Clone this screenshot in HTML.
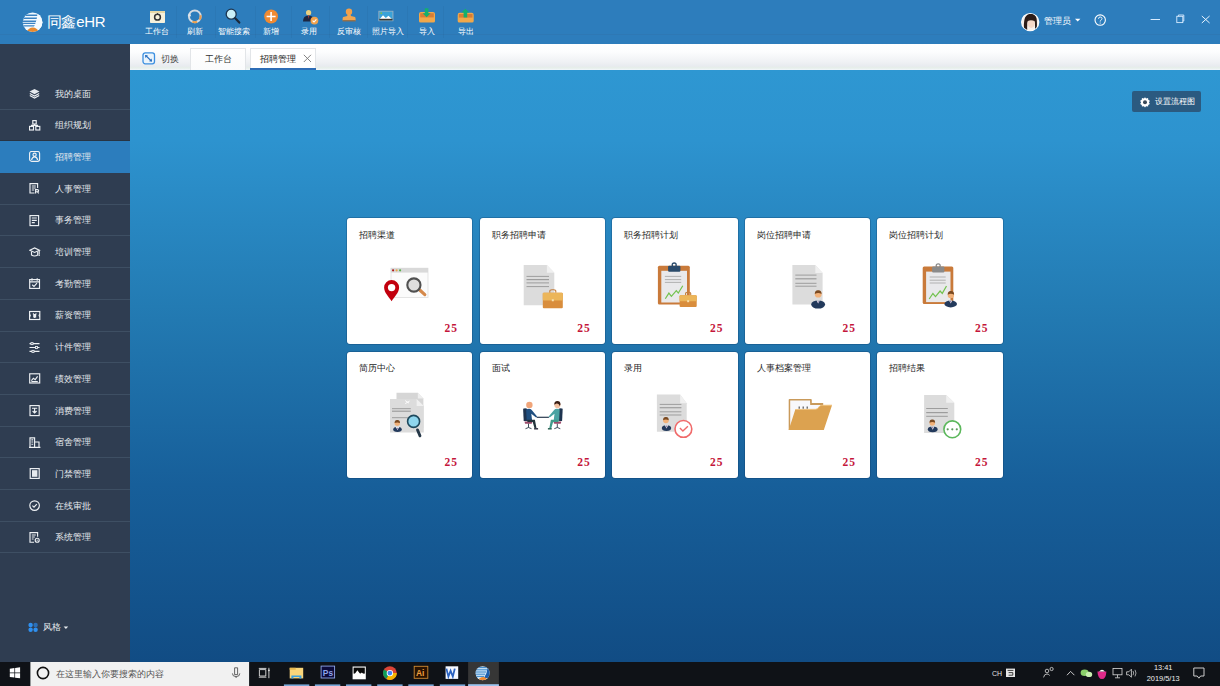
<!DOCTYPE html>
<html><head><meta charset="utf-8">
<style>
*{box-sizing:border-box;margin:0;padding:0}
html,body{width:1220px;height:686px;overflow:hidden}
body{position:relative;font-family:"Liberation Sans",sans-serif;background:#2d7dbc}
.abs{position:absolute}
#hdr{left:0;top:0;width:1220px;height:44px;background:#2d7dbc}
#side{left:0;top:44px;width:130px;height:618px;background:#2f3d51}
#tabs{left:130px;top:44px;width:1090px;height:26px;background:linear-gradient(#ffffff 0%,#fcfdfe 30%,#eff1f4 70%,#e8ebef 85%,#e6efe9 92%,#f2f6fc 100%)}
#main{left:130px;top:70px;width:1090px;height:592px;background:linear-gradient(#2e97d2 0%,#2d93cf 12%,#237bb3 40%,#175f9a 70%,#114c84 100%)}
#task{left:0;top:662px;width:1220px;height:24px;background:#0f1217}
.item{position:absolute;left:0;width:130px;height:31.7px;border-bottom:1px solid #3e4f63}
.item .t{position:absolute;left:55px;top:10.5px;font-size:9px;line-height:10px;color:#e6eaee;white-space:nowrap}
.item svg{position:absolute;left:29px;top:10px}
.card{position:absolute;width:125.5px;height:125.9px;background:#fff;border-radius:3px;box-shadow:0 0 0 0.7px rgba(10,50,90,0.35)}
.card .t{position:absolute;left:12px;top:11.6px;font-size:9px;line-height:10px;color:#1e1e1e;white-space:nowrap}
.card .n{position:absolute;right:14.2px;bottom:12px;font-family:"Liberation Serif",serif;font-weight:bold;font-size:11.5px;line-height:8px;color:#c4163a;letter-spacing:1px}
.card svg{position:absolute;left:0;top:0}
.tb{position:absolute;top:27px;font-size:7.5px;line-height:9px;color:#fff;white-space:nowrap;transform:translateX(-50%)}
.sep{position:absolute;top:6px;width:1px;height:32px;background:rgba(0,0,0,0.035)}
</style></head><body>

<div id="hdr" class="abs">
<div class="abs" style="left:0;top:33.6px;width:1220px;height:1.2px;background:rgba(60,90,120,0.12)"></div>
<svg class="abs" style="left:22px;top:12px" width="22" height="21" viewBox="0 0 22 21">
<defs><clipPath id="lc"><circle cx="10.6" cy="10.2" r="9.8"/></clipPath></defs>
<circle cx="10.6" cy="10.2" r="9.8" fill="#f2faff"/>
<g clip-path="url(#lc)">
<path d="M0 3.2h16M0 6.2h16M0 9.2h15M0 11.4h14M0 13.9h13" stroke="#3a82c2" stroke-width="1.35"/>
<path d="M15.2 0 Q16 6 11.6 15.8 L22 16 L22 0Z" fill="#f4fbff"/>
<path d="M3.6 21 Q6.4 15.8 10.8 15.6 Q15.2 15.8 17.8 21Z" fill="#e98a2c"/>
</g></svg>
<div class="abs" style="left:46.8px;top:14px;font-size:14.5px;line-height:16px;color:#fff;white-space:nowrap;letter-spacing:-0.3px">同鑫<span style="font-size:15px">eHR</span></div>

<svg class="abs" style="left:140px;top:5px" width="345" height="22" viewBox="140 5 345 22">
<!-- 工作台 -->
<rect x="150" y="11" width="15" height="12" rx="0.8" fill="#f6f1dc"/>
<rect x="150" y="11" width="15" height="2" fill="#e7d9a8"/>
<circle cx="157.5" cy="17.2" r="2.9" fill="none" stroke="#333" stroke-width="1.5"/>
<rect x="157" y="13.2" width="1" height="1.5" fill="#333"/>
<!-- refresh -->
<circle cx="194.8" cy="16.3" r="5.9" fill="none" stroke="#d3dbe3" stroke-width="2"/>
<path d="M200.5 15.2 A5.9 5.9 0 0 1 199.6 19.8" fill="none" stroke="#e89a50" stroke-width="2"/>
<path d="M192.4 21.7 A5.9 5.9 0 0 0 197 21.8" fill="none" stroke="#e8a050" stroke-width="2"/>
<path d="M187.6 15.6 L190 12.8 L191.2 16.4Z" fill="#dfe6ec"/>
<!-- search -->
<circle cx="231.2" cy="14.2" r="5" fill="#c9eff7" stroke="#1c3550" stroke-width="1.3"/>
<path d="M235.2 18.3 L239.3 22.6" stroke="#1c2a3a" stroke-width="2.2" stroke-linecap="round"/>
<!-- add -->
<circle cx="271.1" cy="16.5" r="6.9" fill="#ef8a32"/>
<path d="M266.6 16.5h9M271.1 12v9" stroke="#fff" stroke-width="1.6"/>
<!-- luyong -->
<circle cx="308.6" cy="12.7" r="2.6" fill="#e9cf80"/>
<path d="M303 21.5 Q303 15.4 308.6 15.4 Q314 15.4 314 21.5Z" fill="#1c2640"/>
<path d="M308 15.6 L309.2 15.6 L308.9 19 Z" fill="#c9403a"/>
<circle cx="314.4" cy="20.6" r="3.9" fill="#f0a24e"/>
<path d="M312.6 20.6 L314 22 L316.4 19.3" stroke="#fff" stroke-width="1.1" fill="none"/>
<!-- stamp -->
<circle cx="349" cy="11.8" r="3.2" fill="#f2a04a"/>
<path d="M347.6 14 L350.4 14 L351 16 L355 17 Q355.6 17.5 355.6 19 L355.6 20.4 L342.6 20.4 L342.6 19 Q342.6 17.5 343.2 17 L347.2 16Z" fill="#f0a652"/>
<rect x="342.6" y="20.2" width="13" height="1.2" fill="#9b6a3a"/>
<!-- photo -->
<rect x="378.4" y="10.8" width="15" height="10.4" fill="#9ab0c0"/>
<rect x="379.3" y="11.6" width="13.2" height="8.8" fill="#3aa2d8"/>
<path d="M379.3 19.6 L383 15.3 L385.8 18 L388.4 15.8 L392.5 19.6Z" fill="#fff"/>
<rect x="379.3" y="18.8" width="13.2" height="1.6" fill="#3a3530"/>
<circle cx="381.2" cy="13.2" r="0.9" fill="#7ac050"/>
<!-- import -->
<path d="M419 14 Q419 12 421 12 L433 12 Q435 12 435 14 L435 21 Q435 22.6 433.4 22.6 L420.6 22.6 Q419 22.6 419 21Z" fill="#f1a84a"/>
<path d="M420.2 13.2 L433.8 13.2 L433.8 17.4 L420.2 17.4Z" fill="#d77d35"/>
<path d="M424.8 8.3h3.6v5h2.2l-4 3.9-4-3.9h2.2Z" fill="#12b06e"/>
<!-- export -->
<path d="M457.7 15 Q457.7 12.8 459.7 12.8 L471.7 12.8 Q473.7 12.8 473.7 15 L473.7 21 Q473.7 22.6 472.1 22.6 L459.3 22.6 Q457.7 22.6 457.7 21Z" fill="#f1a84a"/>
<path d="M458.9 14 L472.5 14 L472.5 17.6 L458.9 17.6Z" fill="#d77d35"/>
<path d="M463.6 17.6h3.6v-5h2.2l-4-3.9-4 3.9h2.2Z" fill="#12b06e"/>
</svg>
<div class="sep" style="left:175.5px"></div><div class="sep" style="left:215px"></div><div class="sep" style="left:255px"></div><div class="sep" style="left:290.5px"></div><div class="sep" style="left:328.5px"></div><div class="sep" style="left:367px"></div><div class="sep" style="left:406.5px"></div><div class="sep" style="left:443px"></div>
<div class="tb" style="left:157px">工作台</div>
<div class="tb" style="left:194.5px">刷新</div>
<div class="tb" style="left:233.8px">智能搜索</div>
<div class="tb" style="left:271px">新增</div>
<div class="tb" style="left:309.2px">录用</div>
<div class="tb" style="left:349.3px">反审核</div>
<div class="tb" style="left:387.5px">照片导入</div>
<div class="tb" style="left:427.2px">导入</div>
<div class="tb" style="left:466.2px">导出</div>

<svg class="abs" style="left:1020px;top:12px" width="21" height="20" viewBox="1020 12 21 20">
<defs><clipPath id="av"><circle cx="1030.2" cy="22.1" r="8.3"/></clipPath></defs>
<circle cx="1030.2" cy="22.1" r="9.2" fill="#fff"/>
<g clip-path="url(#av)">
<rect x="1020" y="12" width="21" height="20" fill="#f6f0ec"/>
<path d="M1024 32 Q1023.4 21 1025.2 17.2 Q1027.6 13.6 1031.6 13.8 Q1035.8 14.4 1036.6 18.6 Q1037.4 24 1036.4 32 L1034.8 32 Q1035.4 25 1034.6 21 Q1031 19.6 1027.6 21.6 Q1026.8 26 1027.4 32Z" fill="#2c1c18"/>
<ellipse cx="1031.2" cy="23.2" rx="3.6" ry="4.8" fill="#f4d8c8"/>
<path d="M1027.4 21 Q1029 17.4 1032.4 17.6 Q1034.8 18.4 1035 21.6 Q1032 19.4 1027.4 21Z" fill="#2c1c18"/>
</g></svg>
<div class="abs" style="left:1044px;top:15.5px;font-size:9px;line-height:10px;color:#fff;white-space:nowrap">管理员</div>
<svg class="abs" style="left:1074px;top:18px" width="8" height="5"><path d="M1 0.8 L6.4 0.8 L3.7 3.6Z" fill="#fff"/></svg>
<svg class="abs" style="left:1093px;top:13px" width="15" height="15" viewBox="0 0 15 15">
<circle cx="7.2" cy="7.1" r="5.2" fill="none" stroke="#fff" stroke-width="1.1"/>
<path d="M5.5 5.8 Q5.5 4 7.2 4 Q9 4 9 5.6 Q9 6.6 7.8 7.2 Q7.2 7.6 7.2 8.6" fill="none" stroke="#fff" stroke-width="0.9"/>
<circle cx="7.2" cy="10" r="0.6" fill="#fff"/>
</svg>
<svg class="abs" style="left:1140px;top:8px" width="80" height="28" viewBox="1140 8 80 28">
<path d="M1150.6 19.5h9.4" stroke="#d8ecff" stroke-width="1"/>
<rect x="1176.8" y="16.3" width="6" height="6.3" fill="none" stroke="#d8ecff" stroke-width="0.9"/>
<path d="M1178.4 16.3 L1178.4 15 L1183.8 15 L1183.8 21 L1182.8 21" fill="none" stroke="#d8ecff" stroke-width="0.9"/>
<path d="M1201.8 16 L1209.6 23 M1209.6 16 L1201.8 23" stroke="#e8f4ff" stroke-width="1"/>
</svg>
</div>
<div id="side" class="abs"><div class="item" style="top:34.00px;"><svg width="12" height="12" viewBox="0 0 12 12"><path d="M5.5 1 L10.5 3.6 L5.5 6.2 L0.5 3.6Z" fill="#e6eaee"/><path d="M0.8 5.6 L5.5 8 L10.2 5.6 M0.8 7.6 L5.5 10 L10.2 7.6" fill="none" stroke="#eef1f4" stroke-width="1.15"/></svg><div class="t">我的桌面</div></div>
<div class="item" style="top:65.70px;border-bottom-color:#283444;"><svg width="12" height="12" viewBox="0 0 12 12"><rect x="3.8" y="0.6" width="3.4" height="3.4" fill="none" stroke="#eef1f4" stroke-width="1.15"/><rect x="0.5" y="6.4" width="4" height="3.6" fill="none" stroke="#eef1f4" stroke-width="1.15"/><rect x="6.8" y="6.4" width="4" height="3.6" fill="none" stroke="#eef1f4" stroke-width="1.15"/><path d="M5.5 4v1.4M2.5 6.4V5.4h6v1" fill="none" stroke="#eef1f4" stroke-width="1.15"/></svg><div class="t">组织规划</div></div>
<div class="item" style="top:97.40px;background:#2c7dbd;border-bottom-color:#2c7dbd;"><svg width="12" height="12" viewBox="0 0 12 12"><rect x="0.6" y="0.5" width="10" height="9.8" rx="2" fill="none" stroke="#eef1f4" stroke-width="1.15"/><circle cx="5.6" cy="3.7" r="1.6" fill="none" stroke="#eef1f4" stroke-width="1.15"/><path d="M2.6 9 Q3.2 5.8 5.6 5.8 Q8 5.8 8.6 9" fill="none" stroke="#eef1f4" stroke-width="1.15"/></svg><div class="t">招聘管理</div></div>
<div class="item" style="top:129.10px;"><svg width="12" height="12" viewBox="0 0 12 12"><path d="M8.6 5 V0.6 H1 V10 H5.5" fill="none" stroke="#eef1f4" stroke-width="1.15"/><path d="M2.8 3h4M2.8 5h4M2.8 7h2.4" fill="none" stroke="#eef1f4" stroke-width="1.15"/><path d="M6.6 10.4 V6.6 H8.4 Q9.6 6.6 9.6 7.7 Q9.6 8.7 8.4 8.7 H6.6 M8.2 8.7 L9.8 10.4" fill="none" stroke="#eef1f4" stroke-width="1.15" stroke-width="0.9"/></svg><div class="t">人事管理</div></div>
<div class="item" style="top:160.80px;"><svg width="12" height="12" viewBox="0 0 12 12"><rect x="1" y="0.6" width="8.6" height="10" fill="none" stroke="#eef1f4" stroke-width="1.15"/><path d="M2.8 3h5M2.8 5.3h5M2.8 7.6h3" fill="none" stroke="#eef1f4" stroke-width="1.15"/></svg><div class="t">事务管理</div></div>
<div class="item" style="top:192.50px;"><svg width="12" height="12" viewBox="0 0 12 12"><path d="M0.8 3.2 L5.6 1 L10.4 3.2 L5.6 5.4Z" fill="none" stroke="#eef1f4" stroke-width="1.15"/><path d="M2.5 4.4 V8 Q5.6 10 8.7 8 V4.4" fill="none" stroke="#eef1f4" stroke-width="1.15"/><path d="M10.2 3.4 V7.4" fill="none" stroke="#eef1f4" stroke-width="1.15"/><circle cx="10.2" cy="8.2" r="0.8" fill="#e6eaee"/></svg><div class="t">培训管理</div></div>
<div class="item" style="top:224.20px;"><svg width="12" height="12" viewBox="0 0 12 12"><rect x="0.7" y="1.6" width="9.8" height="8.8" fill="none" stroke="#eef1f4" stroke-width="1.15"/><path d="M0.7 3.8h9.8M3 0.3v2.4M8.2 0.3v2.4" fill="none" stroke="#eef1f4" stroke-width="1.15"/><path d="M3.2 6.8 L5 8.4 L8 5.2" fill="none" stroke="#eef1f4" stroke-width="1.15"/></svg><div class="t">考勤管理</div></div>
<div class="item" style="top:255.90px;"><svg width="12" height="12" viewBox="0 0 12 12"><rect x="0.6" y="1.5" width="10.2" height="8" fill="none" stroke="#eef1f4" stroke-width="1.15"/><path d="M4 3.5 L5.7 5.3 L7.4 3.5M5.7 5.3v2.6M4.2 5.6h3M4.2 6.8h3" fill="none" stroke="#eef1f4" stroke-width="1.15" stroke-width="0.8"/><path d="M0.6 4.4 Q2 5.5 0.6 6.6 M10.8 4.4 Q9.4 5.5 10.8 6.6" fill="none" stroke="#eef1f4" stroke-width="1.15"/></svg><div class="t">薪资管理</div></div>
<div class="item" style="top:287.60px;"><svg width="12" height="12" viewBox="0 0 12 12"><path d="M0.5 1.6h10M0.5 5.5h10M0.5 9.4h10" fill="none" stroke="#eef1f4" stroke-width="1.15"/><rect x="2" y="0.6" width="2" height="2" fill="#2f3d51" stroke="#e6eaee" stroke-width="0.9"/><rect x="6.5" y="4.5" width="2" height="2" fill="#2f3d51" stroke="#e6eaee" stroke-width="0.9"/><rect x="3" y="8.4" width="2" height="2" fill="#2f3d51" stroke="#e6eaee" stroke-width="0.9"/></svg><div class="t">计件管理</div></div>
<div class="item" style="top:319.30px;"><svg width="12" height="12" viewBox="0 0 12 12"><rect x="0.7" y="0.8" width="10" height="9.2" fill="none" stroke="#eef1f4" stroke-width="1.15"/><path d="M2.4 7.6 L4.4 5.2 L6.2 6.6 L8.6 3.4" fill="none" stroke="#eef1f4" stroke-width="1.15"/><path d="M2.4 8.6h6.4" fill="none" stroke="#eef1f4" stroke-width="1.15"/></svg><div class="t">绩效管理</div></div>
<div class="item" style="top:351.00px;"><svg width="12" height="12" viewBox="0 0 12 12"><rect x="1" y="0.6" width="9.2" height="10" fill="none" stroke="#eef1f4" stroke-width="1.15"/><path d="M3 3.2h5.2M5.6 3.2v4.6M3.6 6 L5.6 8 L7.6 6" fill="none" stroke="#eef1f4" stroke-width="1.15"/></svg><div class="t">消费管理</div></div>
<div class="item" style="top:382.70px;"><svg width="12" height="12" viewBox="0 0 12 12"><path d="M1 10.4 V0.8 H5.6 V10.4 M0 10.4h11.4 M5.6 5h4.4v5.4" fill="none" stroke="#eef1f4" stroke-width="1.15"/><path d="M2.4 2.8h1.8M2.4 5h1.8M2.4 7.2h1.8" fill="none" stroke="#eef1f4" stroke-width="1.15"/></svg><div class="t">宿舍管理</div></div>
<div class="item" style="top:414.40px;"><svg width="12" height="12" viewBox="0 0 12 12"><rect x="1.2" y="0.6" width="9" height="9.8" fill="none" stroke="#eef1f4" stroke-width="1.15"/><rect x="3" y="2.2" width="5.4" height="6.6" fill="#e6eaee"/></svg><div class="t">门禁管理</div></div>
<div class="item" style="top:446.10px;"><svg width="12" height="12" viewBox="0 0 12 12"><circle cx="5.6" cy="5.6" r="4.8" fill="none" stroke="#eef1f4" stroke-width="1.15"/><path d="M3.4 5.6 L5 7.2 L7.8 4.2" fill="none" stroke="#eef1f4" stroke-width="1.15"/></svg><div class="t">在线审批</div></div>
<div class="item" style="top:477.80px;"><svg width="12" height="12" viewBox="0 0 12 12"><path d="M8.6 4.8 V0.6 H1 V10.2 H5" fill="none" stroke="#eef1f4" stroke-width="1.15"/><path d="M2.8 3h4M2.8 5h3M2.8 7h1.8" fill="none" stroke="#eef1f4" stroke-width="1.15"/><circle cx="8.2" cy="8.2" r="2" fill="none" stroke="#eef1f4" stroke-width="1.15"/><circle cx="8.2" cy="8.2" r="0.6" fill="#e6eaee"/></svg><div class="t">系统管理</div></div>
<svg class="abs" style="left:27px;top:577px" width="12" height="12" viewBox="0 0 12 12">
<circle cx="3.6" cy="4" r="2.2" fill="#2f90f0"/><circle cx="8.6" cy="4" r="2.2" fill="#2a6fb8"/><circle cx="3.6" cy="8.8" r="2.2" fill="#2f90f0"/><circle cx="8.6" cy="8.8" r="2.2" fill="#2f90f0"/>
</svg>
<div class="abs" style="left:42.5px;top:578px;font-size:9px;line-height:10px;color:#e6eaee;white-space:nowrap">风格</div>
<svg class="abs" style="left:63px;top:582px" width="6" height="4"><path d="M0.6 0.6 L5.2 0.6 L2.9 3Z" fill="#e6eaee"/></svg>
</div>
<div id="tabs" class="abs">
<svg class="abs" style="left:11.5px;top:7.5px" width="14" height="13" viewBox="0 0 14 13">
<rect x="1" y="0.8" width="11.5" height="11" rx="2.2" fill="#eaf4fc" stroke="#3b8fe0" stroke-width="1.3"/>
<path d="M3.6 3.4 L9.6 9.2" stroke="#2a6fc0" stroke-width="1.2"/>
<path d="M3 3 L6 3.4 L3.4 6Z" fill="#2a6fc0"/><path d="M10 9.6 L7 9.2 L9.6 6.6Z" fill="#2a6fc0"/>
</svg>
<div class="abs" style="left:31px;top:9.5px;font-size:9px;line-height:10px;color:#444;white-space:nowrap">切换</div>
<div class="abs" style="left:59.8px;top:3.6px;width:56px;height:22.4px;background:linear-gradient(#fff,#fafbfc);border:1px solid #e2e5e8;border-bottom:none"></div>
<div class="abs" style="left:74.6px;top:9.5px;font-size:9px;line-height:10px;color:#333;white-space:nowrap">工作台</div>
<div class="abs" style="left:119.7px;top:3.6px;width:66.3px;height:22.4px;background:#fff;border:1px solid #e2e5e8;border-bottom:none"></div>
<div class="abs" style="left:119.7px;top:23.6px;width:66.3px;height:2.4px;background:#2d6db6"></div>
<div class="abs" style="left:130.3px;top:9.5px;font-size:9px;line-height:10px;color:#222;white-space:nowrap">招聘管理</div>
<svg class="abs" style="left:172.5px;top:10px" width="9" height="9" viewBox="0 0 9 9"><path d="M0.8 0.8 L8 8 M8 0.8 L0.8 8" stroke="#777" stroke-width="0.9"/></svg>
</div>
<div id="main" class="abs"><div class="card" style="left:216.80px;top:148.00px"><svg width="126" height="126" viewBox="346.8 218 126 126"><rect x="390.8" y="268.2" width="37" height="29.4" fill="#fbfbfb" stroke="#dedede" stroke-width="0.8"/>
<rect x="390.6" y="268" width="37.2" height="4.6" fill="#d9d9d9"/>
<circle cx="392.9" cy="270.3" r="1.1" fill="#b01818"/><circle cx="396.4" cy="270.3" r="1.1" fill="#e8a850"/><circle cx="399.9" cy="270.3" r="1.1" fill="#5ab04a"/>
<path d="M419.8 290.3 L424.6 294.6" stroke="#d5894a" stroke-width="3.2" stroke-linecap="round"/>
<circle cx="413.7" cy="285" r="6.6" fill="#dedede" stroke="#505050" stroke-width="2.1"/>
<path d="M391.4 301.2 C388.6 297 383.9 292.6 383.9 287.6 A7.5 7.5 0 0 1 398.9 287.6 C398.9 292.6 394.2 297 391.4 301.2Z" fill="#c2000e"/>
<circle cx="391.4" cy="287.6" r="3.7" fill="#fff"/></svg><div class="t">招聘渠道</div><div class="n">25</div></div>
<div class="card" style="left:349.50px;top:148.00px"><svg width="126" height="126" viewBox="479.5 218 126 126"><path d="M523.2 264.9 L546.4 264.9 L553.8 272.7 L553.8 305.3 L523.2 305.3Z" fill="#dcdcdc"/><path d="M546.4 264.9 L553.8 272.7 L546.4 272.7Z" fill="#f0f0f0"/><path d="M526 276.4H548.5" stroke="#9d9d9d" stroke-width="1"/><path d="M526 279.6H548.5" stroke="#9d9d9d" stroke-width="1.2"/><path d="M526 282.9H548.5" stroke="#9d9d9d" stroke-width="1"/><path d="M526 286.6H548.5" stroke="#9d9d9d" stroke-width="1"/><path d="M549.30 292.80 V290.80 Q549.30 289.80 551.30 289.80 H553.30 Q555.30 289.80 555.30 290.80 V292.80" fill="none" stroke="#c27d3c" stroke-width="1.1"/><rect x="542.30" y="292.80" width="20.00" height="15.40" rx="1" fill="#d98d3c"/><rect x="542.30" y="292.80" width="20.00" height="7.70" rx="1" fill="#ecb65a"/><rect x="551.30" y="299.27" width="2" height="2" fill="#f6e0b0"/></svg><div class="t">职务招聘申请</div><div class="n">25</div></div>
<div class="card" style="left:482.10px;top:148.00px"><svg width="126" height="126" viewBox="612.1 218 126 126"><rect x="658" y="265.8" width="31.90" height="38.70" rx="1.5" fill="#c97a3a"/><rect x="661.40" y="270.80" width="25.70" height="31.70" fill="#e9e9eb"/><rect x="668.20" y="265.80" width="12.3" height="6" rx="1" fill="#2b4b6b"/><circle cx="674.30" cy="265.00" r="2" fill="none" stroke="#2b4b6b" stroke-width="1.3"/><path d="M665 276.4H681.3M665 279.6H681.3M665 282.4H681.3" stroke="#aaa" stroke-width="0.9"/><path d="M665.4 298.8 L669 293.1 L671.5 296.4 L676.4 290.7 L678.4 293.1 L682.9 285.8" fill="none" stroke="#72c24e" stroke-width="1.2"/><path d="M685.69 295.30 V293.30 Q685.69 292.30 687.39 292.30 H689.11 Q690.81 292.30 690.81 293.30 V295.30" fill="none" stroke="#c27d3c" stroke-width="1.1"/><rect x="679.70" y="295.30" width="17.10" height="11.70" rx="1" fill="#d98d3c"/><rect x="679.70" y="295.30" width="17.10" height="5.85" rx="1" fill="#ecb65a"/><rect x="687.25" y="300.21" width="2" height="2" fill="#f6e0b0"/></svg><div class="t">职务招聘计划</div><div class="n">25</div></div>
<div class="card" style="left:614.80px;top:148.00px"><svg width="126" height="126" viewBox="744.8 218 126 126"><path d="M792.2 264.9 L815.1 264.9 L822.4 273.1 L822.4 304.5 L792.2 304.5Z" fill="#dcdcdc"/><path d="M815.1 264.9 L822.4 273.1 L815.1 273.1Z" fill="#f0f0f0"/><path d="M795.1 275.1H816.3" stroke="#9d9d9d" stroke-width="1"/><path d="M795.1 278.8H816.3" stroke="#9d9d9d" stroke-width="1.2"/><path d="M795.1 283.3H816.3" stroke="#9d9d9d" stroke-width="1"/><path d="M795.1 286.2H816.3" stroke="#9d9d9d" stroke-width="1"/><ellipse cx="817.95" cy="304.50" rx="6.95" ry="4.10" fill="#233a5c"/><path d="M816.35 300.40 L817.95 303.60 L819.55 300.40Z" fill="#fff"/><path d="M817.45 301.00 L818.45 301.00 L817.95 303.20Z" fill="#6a4a8a"/><circle cx="818" cy="294.2" r="3.4" fill="#f2b27a"/><path d="M814.60 294.00 Q814.60 290.00 818.00 290.20 Q821.40 290.00 821.40 294.00 Q818.00 292.00 814.60 294.00Z" fill="#7a4a22"/></svg><div class="t">岗位招聘申请</div><div class="n">25</div></div>
<div class="card" style="left:747.30px;top:148.00px"><svg width="126" height="126" viewBox="877.3 218 126 126"><rect x="923" y="266.6" width="30.60" height="37.50" rx="1.5" fill="#c97a3a"/><rect x="926.40" y="271.60" width="24.40" height="30.50" fill="#e9e9eb"/><rect x="932.40" y="266.60" width="12.3" height="6" rx="1" fill="#8a8a8a"/><circle cx="938.50" cy="265.80" r="2" fill="none" stroke="#8a8a8a" stroke-width="1.3"/><path d="M930 277H946M930 280.2H946M930 283H946" stroke="#aaa" stroke-width="0.9"/><path d="M929.5 299 L933.2 293.5 L935.8 296.6 L940.4 291 L942.6 293.4 L946.8 286" fill="none" stroke="#72c24e" stroke-width="1.2"/><ellipse cx="951.00" cy="303.90" rx="6.30" ry="3.50" fill="#233a5c"/><path d="M949.40 300.40 L951.00 303.60 L952.60 300.40Z" fill="#fff"/><path d="M950.50 301.00 L951.50 301.00 L951.00 303.20Z" fill="#6a4a8a"/><circle cx="951.2" cy="294.9" r="3.2" fill="#f2b27a"/><path d="M948.00 294.70 Q948.00 290.90 951.20 291.10 Q954.40 290.90 954.40 294.70 Q951.20 292.90 948.00 294.70Z" fill="#7a4a22"/></svg><div class="t">岗位招聘计划</div><div class="n">25</div></div>
<div class="card" style="left:216.80px;top:281.90px"><svg width="126" height="126" viewBox="346.8 351.9 126 126"><path d="M396.3 392.7 L417.6 392.7 L423.2 398.4 L423.2 428 L396.3 428Z" fill="#d6d6d6"/><path d="M417.6 392.7 L423.2 398.4 L417.6 398.4Z" fill="#eee"/><path d="M389.8 398.8 L416.4 398.8 L423.6 405.8 L423.6 432.3 L389.8 432.3Z" fill="#dcdcdc"/><path d="M416.4 398.8 L423.6 405.8 L416.4 405.8Z" fill="#f0f0f0"/><path d="M391.8 408.6H410.6" stroke="#9d9d9d" stroke-width="1"/><path d="M391.8 411.1H410.6" stroke="#9d9d9d" stroke-width="1.2"/><path d="M391.8 417.6H410.6" stroke="#9d9d9d" stroke-width="1"/><path d="M405 400.5 L408.8 403 M405 403.5 L409.4 401" stroke="#fff" stroke-width="0.9"/><ellipse cx="397.30" cy="429.45" rx="4.30" ry="2.45" fill="#233a5c"/><path d="M395.70 427.00 L397.30 430.20 L398.90 427.00Z" fill="#fff"/><path d="M396.80 427.60 L397.80 427.60 L397.30 429.80Z" fill="#6a4a8a"/><circle cx="397.1" cy="423.2" r="2.7" fill="#f2b27a"/><path d="M394.40 423.00 Q394.40 419.70 397.10 419.90 Q399.80 419.70 399.80 423.00 Q397.10 421.70 394.40 423.00Z" fill="#7a4a22"/><path d="M417.3 429.8 L419.8 435.8" stroke="#263848" stroke-width="2.8" stroke-linecap="round"/><circle cx="413.4" cy="421.3" r="6" fill="#8fd6ee" stroke="#1f4a5e" stroke-width="1.6"/></svg><div class="t">简历中心</div><div class="n">25</div></div>
<div class="card" style="left:349.50px;top:281.90px"><svg width="126" height="126" viewBox="479.5 351.9 126 126"><path d="M536.2 417.2 H548.4" stroke="#2a3a50" stroke-width="1.2"/>
<path d="M522.6 408.6 Q524.6 407.6 526.6 408.6 L526.6 420.8 L523.2 420.8Z" fill="#1e3450"/>
<path d="M524 421.4 H531.6 Q532 423 531 423.6 H524.6Z" fill="#9a4a6a"/>
<path d="M528 423.6 V427.4 M525 428.6 L528 427.4 L531 428.6" stroke="#2a3a48" stroke-width="0.9" fill="none"/>
<path d="M525.6 409.4 Q529 407.6 531 409.6 L536.6 416.4 L535.6 417.4 L530.8 413.6 L531.6 420.4 L526.2 420.6Z" fill="#1f4f80"/>
<path d="M526.4 419.6 H534.4 L536 428.2 H534 L532.2 421.8 H527Z" fill="#24343c"/>
<path d="M533.6 428 H537.6 V429.4 H533.6Z" fill="#2a2a3a"/>
<circle cx="528.9" cy="404.8" r="3.2" fill="#f0a57a"/>
<path d="M562.2 408.6 Q560.2 407.6 558.2 408.6 L558.2 420.8 L561.6 420.8Z" fill="#1e3450"/>
<path d="M560.8 421.4 H553.2 Q552.8 423 553.8 423.6 H560.2Z" fill="#9a4a6a"/>
<path d="M556.8 423.6 V427.4 M559.8 428.6 L556.8 427.4 L553.8 428.6" stroke="#2a3a48" stroke-width="0.9" fill="none"/>
<path d="M559.2 409.4 Q555.8 407.6 553.8 409.6 L548.2 416.4 L549.2 417.4 L554 413.6 L553.2 420.4 L558.6 420.6Z" fill="#4aa3a3"/>
<path d="M558.4 419.6 H550.4 L548.8 428.2 H550.8 L552.6 421.8 H557.8Z" fill="#3f9a8a"/>
<path d="M547.4 428 H551.2 V429.4 H547.4Z" fill="#1f5a4a"/>
<circle cx="556.9" cy="405" r="3.1" fill="#f2c0a0"/>
<path d="M553.8 404.6 Q553.6 401 556.9 401 Q560 401 560 404.4 L559.2 406 Q558.6 403 556 403.4Z" fill="#3a1e14"/></svg><div class="t">面试</div><div class="n">25</div></div>
<div class="card" style="left:482.10px;top:281.90px"><svg width="126" height="126" viewBox="612.1 351.9 126 126"><path d="M657 394.5 L680.2 394.5 L686.8 403.1 L686.8 431.7 L657 431.7Z" fill="#dcdcdc"/><path d="M680.2 394.5 L686.8 403.1 L680.2 403.1Z" fill="#f0f0f0"/><path d="M659.8 404.3H681.5" stroke="#9d9d9d" stroke-width="1"/><path d="M659.8 407.6H681.5" stroke="#9d9d9d" stroke-width="1.2"/><path d="M659.8 411.7H681.5" stroke="#9d9d9d" stroke-width="1"/><path d="M659.8 414.9H681.5" stroke="#9d9d9d" stroke-width="1"/><ellipse cx="666.60" cy="428.00" rx="4.70" ry="2.90" fill="#233a5c"/><path d="M665.00 425.10 L666.60 428.30 L668.20 425.10Z" fill="#fff"/><path d="M666.10 425.70 L667.10 425.70 L666.60 427.90Z" fill="#6a4a8a"/><circle cx="666" cy="420.4" r="2.8" fill="#f2b27a"/><path d="M663.20 420.20 Q663.20 416.80 666.00 417.00 Q668.80 416.80 668.80 420.20 Q666.00 418.80 663.20 420.20Z" fill="#7a4a22"/><circle cx="683.5" cy="428.8" r="8.4" fill="#fff" stroke="#f06a6a" stroke-width="1.6"/><path d="M680 428 L683 430.9 L688 426.2" fill="none" stroke="#f06a6a" stroke-width="1.4"/></svg><div class="t">录用</div><div class="n">25</div></div>
<div class="card" style="left:614.80px;top:281.90px"><svg width="126" height="126" viewBox="744.8 351.9 126 126"><path d="M788.5 399.6 Q788.5 398.8 789.4 398.8 L810.6 398.8 Q811.6 398.8 811.6 399.8 L811.6 403 L823 403 L823 430 L788.5 430Z" fill="#c99a5a"/>
<path d="M790 400.5 L809.8 400.5 L810 405 L821 405 L821 428 L790 428Z" fill="#f8f8fb"/>
<path d="M799 406.4 V408.6 M803 406.4 V408.6 M807 406.4 V408.6" stroke="#555" stroke-width="1.2"/>
<path d="M795.1 409.4 L815.4 409.2 Q817.4 409.2 818.6 407 Q819.6 405.2 821.6 405.2 L831.8 405.1 L823.6 429.8 L788.5 430Z" fill="#dca250"/>
<path d="M795.1 409.4 L815.4 409.2 Q817.4 409.2 818.6 407 Q819.6 405.2 821.6 405.2 L831.8 405.1" fill="none" stroke="#f0c27a" stroke-width="0.9"/></svg><div class="t">人事档案管理</div><div class="n">25</div></div>
<div class="card" style="left:747.30px;top:281.90px"><svg width="126" height="126" viewBox="877.3 351.9 126 126"><path d="M924.4 394.9 L946.5 394.9 L954.6 402.7 L954.6 432.9 L924.4 432.9Z" fill="#dcdcdc"/><path d="M946.5 394.9 L954.6 402.7 L946.5 402.7Z" fill="#f0f0f0"/><path d="M926.5 408.4H948.1" stroke="#9d9d9d" stroke-width="1"/><path d="M926.5 412.5H948.1" stroke="#9d9d9d" stroke-width="1.2"/><path d="M926.5 416.2H948.1" stroke="#9d9d9d" stroke-width="1"/><ellipse cx="933.00" cy="429.25" rx="4.90" ry="2.85" fill="#233a5c"/><path d="M931.40 426.40 L933.00 429.60 L934.60 426.40Z" fill="#fff"/><path d="M932.50 427.00 L933.50 427.00 L933.00 429.20Z" fill="#6a4a8a"/><circle cx="932.6" cy="422.9" r="2.8" fill="#f2b27a"/><path d="M929.80 422.70 Q929.80 419.30 932.60 419.50 Q935.40 419.30 935.40 422.70 Q932.60 421.30 929.80 422.70Z" fill="#7a4a22"/><circle cx="952.6" cy="429.2" r="8.4" fill="#fff" stroke="#5cb85c" stroke-width="1.6"/><circle cx="948" cy="429.2" r="1.1" fill="#5a9a5a"/><circle cx="952.6" cy="429.2" r="1.1" fill="#5a9a5a"/><circle cx="957.1" cy="429.2" r="1.1" fill="#5a9a5a"/></svg><div class="t">招聘结果</div><div class="n">25</div></div>
<div class="abs" style="left:1002.2px;top:20.9px;width:68.5px;height:21px;background:#2b5a80;border-radius:2px"></div>
<svg class="abs" style="left:1009px;top:26px" width="12" height="12" viewBox="0 0 12 12">
<path d="M6 0.6 L7.2 2.2 L9.4 1.6 L9.6 3.6 L11.4 4.6 L10.4 6.4 L11.4 8.2 L9.6 9.2 L9.4 11 L7.2 10.6 L6 12 L4.8 10.6 L2.6 11 L2.4 9.2 L0.6 8.2 L1.6 6.4 L0.6 4.6 L2.4 3.6 L2.6 1.6 L4.8 2.2Z" fill="#fff" transform="translate(6 6.2) scale(0.9) translate(-6 -6.2)"/>
<circle cx="6" cy="6.2" r="2" fill="#3a4a5a"/>
</svg>
<div class="abs" style="left:1025.2px;top:27.3px;font-size:8px;line-height:9px;color:#fff;white-space:nowrap">设置流程图</div>
</div>
<div id="task" class="abs">
<svg class="abs" style="left:0;top:0" width="1220" height="24" viewBox="0 662 1220 24">
<path d="M9.8 668.8 L14.4 668.1 L14.4 672.6 L9.8 672.6Z M15.1 668 L20.1 667.3 L20.1 672.6 L15.1 672.6Z M9.8 673.3 L14.4 673.3 L14.4 677.6 L9.8 677Z M15.1 673.3 L20.1 673.3 L20.1 678.3 L15.1 677.7Z" fill="#fff"/>
<rect x="30.4" y="662" width="218.7" height="24" fill="#f1f1f1"/>
<circle cx="43" cy="673" r="5.6" fill="none" stroke="#111" stroke-width="1.6"/>
<path d="M234.6 667.8 H237.6 V674.6 H234.6Z" fill="none" stroke="#555" stroke-width="0.9"/>
<path d="M232.4 673.4 Q232.4 676.6 236.1 676.6 Q239.8 676.6 239.8 673.4 M236.1 676.6 V678" fill="none" stroke="#555" stroke-width="0.9"/>
<path d="M258.8 668.4 H266.4 M258.8 677.2 H266.4 M259.4 669.6 V676 H265.8 V669.6Z M268.9 667.8 V678.2" fill="none" stroke="#e0e0e0" stroke-width="0.9"/>
<circle cx="268.9" cy="670.3" r="0.9" fill="#e0e0e0"/>
<rect x="289.7" y="667.8" width="13.5" height="10.6" fill="#f9d57a"/>
<rect x="289.7" y="667.8" width="6" height="2" fill="#e8b850"/>
<path d="M291.4 678.4 V675.4 H301.4 V678.4 H299.4 V677 H293.4 V678.4Z" fill="#3aa0e0"/>
<rect x="283.9" y="684.4" width="25.4" height="1.6" fill="#7aa8d8"/>
<rect x="321.1" y="666.1" width="13.5" height="11.9" fill="#0c0a3a" stroke="#8ea4ea" stroke-width="0.9"/>
<text x="322.8" y="675.6" font-family="Liberation Sans" font-size="8.4" font-weight="bold" fill="#8ea4ea">Ps</text>
<rect x="314.9" y="684.4" width="25.4" height="1.6" fill="#7aa8d8"/>
<rect x="352.6" y="666.5" width="13.2" height="12.8" fill="#fff"/>
<rect x="353.6" y="667.6" width="11.2" height="6" fill="#0a0a0a"/>
<path d="M353.6 679 L353.6 675.6 L357.4 670.2 L360.2 674 L361.8 672.6 L364.8 675.4 L364.8 679Z" fill="#fff"/>
<rect x="346" y="684.4" width="25.4" height="1.6" fill="#7aa8d8"/>
<circle cx="389.9" cy="673.1" r="6.9" fill="#db4437"/>
<path d="M389.9 673.1 L383.9 669.6 A6.9 6.9 0 0 0 386.4 679 Z" fill="#0f9d58"/>
<path d="M389.9 673.1 L386.4 679 A6.9 6.9 0 0 0 396.8 673.1 Z" fill="#f4b400"/>
<circle cx="389.9" cy="673.1" r="3.2" fill="#fff"/>
<circle cx="389.9" cy="673.1" r="2.4" fill="#4285f4"/>
<rect x="377.2" y="684.4" width="25.4" height="1.6" fill="#7aa8d8"/>
<rect x="414.2" y="666.3" width="13.6" height="12" fill="#2a1200" stroke="#d08a30" stroke-width="0.9"/>
<text x="416" y="675.8" font-family="Liberation Sans" font-size="8.4" font-weight="bold" fill="#f0a040">Ai</text>
<rect x="408.3" y="684.4" width="25.4" height="1.6" fill="#7aa8d8"/>
<rect x="445.6" y="666.3" width="12.6" height="12.6" fill="#f4f8ff"/>
<path d="M446.4 668.6 L448.4 676.6 L450.6 670.8 L452.8 676.6 L454.8 668.6" fill="none" stroke="#2a62c0" stroke-width="1.8"/>
<rect x="439.8" y="684.4" width="25.4" height="1.6" fill="#7aa8d8"/>
<rect x="468.1" y="662" width="30.8" height="24" fill="#363636"/>
<defs><clipPath id="tl"><circle cx="482.6" cy="673.2" r="7"/></clipPath></defs>
<g clip-path="url(#tl)">
<rect x="475" y="665" width="16" height="17" fill="#cfe6f8"/>
<path d="M475 667.6h12M475 669.8h12M475 672h11M475 674.2h10M475 676.4h9" stroke="#3a86c8" stroke-width="1"/>
<path d="M487 665 Q488.6 671 484 678 L491 678 L491 665Z" fill="#1d5fae"/>
<path d="M477 681 Q480 677 483 677 Q486 677 488.6 681Z" fill="#f08a30"/>
</g>
<rect x="468.1" y="684.2" width="30.8" height="1.8" fill="#9cc4ee"/>

<text x="992" y="676" font-family="Liberation Sans" font-size="7" fill="#e0e0e0">CH</text>
<rect x="1006" y="668.6" width="9" height="8.4" fill="#e8e8e8"/>
<path d="M1007.6 670.4 H1013.4 M1008.6 672.6 H1012.8 V675.2 H1008.6" stroke="#111" stroke-width="0.8" fill="none"/>
<circle cx="1047" cy="671" r="1.8" fill="none" stroke="#ddd" stroke-width="0.8"/>
<path d="M1043.6 677.4 Q1044 674 1047 674 Q1049 674 1049.6 675.6" fill="none" stroke="#ddd" stroke-width="0.8"/>
<circle cx="1051.6" cy="669" r="1.6" fill="none" stroke="#ddd" stroke-width="0.8"/>
<path d="M1067 675.2 L1070.6 671.4 L1074.4 675.2" fill="none" stroke="#ddd" stroke-width="0.9"/>
<ellipse cx="1084.6" cy="672.8" rx="4" ry="3.2" fill="#8ad06a"/>
<ellipse cx="1089" cy="674.4" rx="3.2" ry="2.6" fill="#c8f0b0"/>
<path d="M1097.4 671.4 Q1098 679 1102 679 Q1106 679 1106.4 671.4Z" fill="#e02a8a"/>
<path d="M1099 671.4 Q1102 668 1105 671.4" fill="#fff"/>
<rect x="1113" y="668.6" width="9" height="6.2" fill="none" stroke="#ddd" stroke-width="0.8"/>
<path d="M1117.5 674.8 V677.6 M1115 677.8 H1120" stroke="#ddd" stroke-width="0.8"/>
<path d="M1126.6 671.8 H1128.8 L1131.4 669.2 V677.2 L1128.8 674.8 H1126.6Z" fill="none" stroke="#ddd" stroke-width="0.8"/>
<path d="M1133 671 Q1134.4 673 1133 675.2 M1135 669.8 Q1137 673 1135 676.4" fill="none" stroke="#ddd" stroke-width="0.7"/>
<text x="1163.2" y="669.6" font-family="Liberation Sans" font-size="7.4" fill="#eee" text-anchor="middle">13:41</text>
<text x="1163.2" y="681.4" font-family="Liberation Sans" font-size="7.4" fill="#eee" text-anchor="middle">2019/5/13</text>
<path d="M1193.8 668 H1204 V676 H1200.6 L1198.9 678.2 L1197.2 676 H1193.8Z" fill="none" stroke="#e0e0e0" stroke-width="0.9"/>
</svg>
<div class="abs" style="left:56.3px;top:6.5px;font-size:9.2px;line-height:10px;color:#555;white-space:nowrap">在这里输入你要搜索的内容</div>
</div>

</body></html>
